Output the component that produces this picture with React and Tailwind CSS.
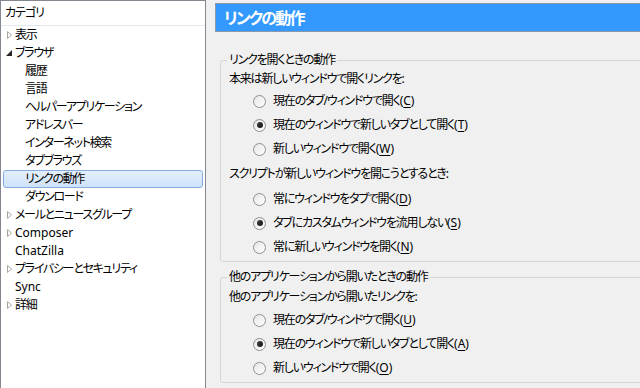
import React from 'react';

const font = "font-['Noto_Sans','Noto_Sans_CJK_JP',sans-serif] [font-feature-settings:'palt']";

const treeItems = [
  { label: '表示', level: 0, toggle: 'closed' },
  { label: 'ブラウザ', level: 0, toggle: 'open' },
  { label: '履歴', level: 1 },
  { label: '言語', level: 1 },
  { label: 'ヘルパーアプリケーション', level: 1 },
  { label: 'アドレスバー', level: 1 },
  { label: 'インターネット検索', level: 1 },
  { label: 'タブブラウズ', level: 1 },
  { label: 'リンクの動作', level: 1, selected: true },
  { label: 'ダウンロード', level: 1 },
  { label: 'メールとニュースグループ', level: 0, toggle: 'closed' },
  { label: 'Composer', level: 0, toggle: 'closed', latin: true },
  { label: 'ChatZilla', level: 0, latin: true },
  { label: 'プライバシーとセキュリティ', level: 0, toggle: 'closed' },
  { label: 'Sync', level: 0, latin: true },
  { label: '詳細', level: 0, toggle: 'closed' },
];

function Twisty({ type }) {
  if (type === 'closed') {
    return (
      <svg width="5" height="8" viewBox="0 0 5 8" className="shrink-0">
        <path d="M0.5 0.5 L4.5 4 L0.5 7.5 Z" fill="white" stroke="#a6a6a6" strokeWidth="1" />
      </svg>
    );
  }
  if (type === 'open') {
    return (
      <svg width="6" height="6" viewBox="0 0 6 6" className="shrink-0">
        <path d="M6 0 L6 6 L0 6 Z" fill="#262626" />
      </svg>
    );
  }
  return null;
}

function TreeRow({ item }) {
  const track = item.latin ? '' : 'tracking-[-1.3px]';
  return (
    <div
      className={`h-[18px] flex items-center text-[12px] text-black mx-[2px] ${
        item.selected ? 'bg-gradient-to-b from-[#e4effd] to-[#cfe2f9] border border-[#84acdd] rounded-[3px]' : 'border border-transparent'
      }`}
    >
      {item.level === 0 ? (
        <div className="flex items-center gap-[3px] pl-[2px]">
          <span className="w-[6px] flex justify-center"><Twisty type={item.toggle} /></span>
          <span className={track}>{item.label}</span>
        </div>
      ) : (
        <span className={`pl-[21px] ${track}`}>{item.label}</span>
      )}
    </div>
  );
}

function Access({ k }) {
  return (
    <span className="tracking-normal">
      (<span className="underline underline-offset-2">{k}</span>)
    </span>
  );
}

function Radio({ checked, text, k }) {
  return (
    <div className="h-6 flex items-center pl-[26px] text-[12px]">
      <span className="w-[13px] h-[13px] rounded-full border border-[#8e8f8f] bg-gradient-to-br from-[#e6e6e6] to-white flex items-center justify-center shrink-0">
        {checked && <span className="w-[6px] h-[6px] rounded-full bg-gradient-to-br from-[#444] to-[#111]" />}
      </span>
      <span className="ml-[7px] tracking-[-1.2px]">
        {text}
        <Access k={k} />
      </span>
    </div>
  );
}

function Label({ children, h }) {
  return <div className={`${h} flex items-center pl-[2px] text-[12px] tracking-[-1.2px]`}>{children}</div>;
}

function Group({ legend, children, className }) {
  return (
    <fieldset className={`border border-[#d5d5d5] rounded-[3px] pl-[6px] pr-0 pb-[2px] -mr-[10px] ${className}`}>
      <legend className="px-[2px] h-[18px] leading-[18px] text-[12px] tracking-[-1.2px]">{legend}</legend>
      {children}
    </fieldset>
  );
}

export default function App() {
  return (
    <div className={`w-[640px] h-[388px] overflow-hidden flex bg-[#f0f0f0] text-black ${font}`}>
      <div className="w-[206px] shrink-0 h-[400px] bg-white border border-[#828790]">
        <div className="h-[25px] flex items-center pl-[4px] text-[12px] tracking-[-1px] border-b border-[#e3e8ee]">カテゴリ</div>
        <div>
          {treeItems.map((item, i) => (
            <TreeRow key={i} item={item} />
          ))}
        </div>
      </div>

      <div className="flex-1 pl-[9px] pt-[3px]">
        <div className="h-[29px] bg-[#3399ff] border border-[#8a9aaa] border-r-0 flex items-center pl-[8px]">
          <span className="text-white font-bold text-[16px] tracking-[-1.8px]">リンクの動作</span>
        </div>

        <div className="pl-[5px]">
          <Group legend="リンクを開くときの動作" className="mt-[19px]">
            <Label h="h-[20px]">本来は新しいウィンドウで開くリンクを:</Label>
            <Radio text="現在のタブ/ウィンドウで開く" k="C" />
            <Radio checked text="現在のウィンドウで新しいタブとして開く" k="T" />
            <Radio text="新しいウィンドウで開く" k="W" />
            <Label h="h-[26px]">スクリプトが新しいウィンドウを開こうとするとき:</Label>
            <Radio text="常にウィンドウをタブで開く" k="D" />
            <Radio checked text="タブにカスタムウィンドウを流用しない" k="S" />
            <Radio text="常に新しいウィンドウを開く" k="N" />
          </Group>

          <Group legend="他のアプリケーションから開いたときの動作" className="mt-[6px]">
            <Label h="h-[22px]">他のアプリケーションから開いたリンクを:</Label>
            <Radio text="現在のタブ/ウィンドウで開く" k="U" />
            <Radio checked text="現在のウィンドウで新しいタブとして開く" k="A" />
            <Radio text="新しいウィンドウで開く" k="O" />
          </Group>
        </div>
      </div>
    </div>
  );
}
